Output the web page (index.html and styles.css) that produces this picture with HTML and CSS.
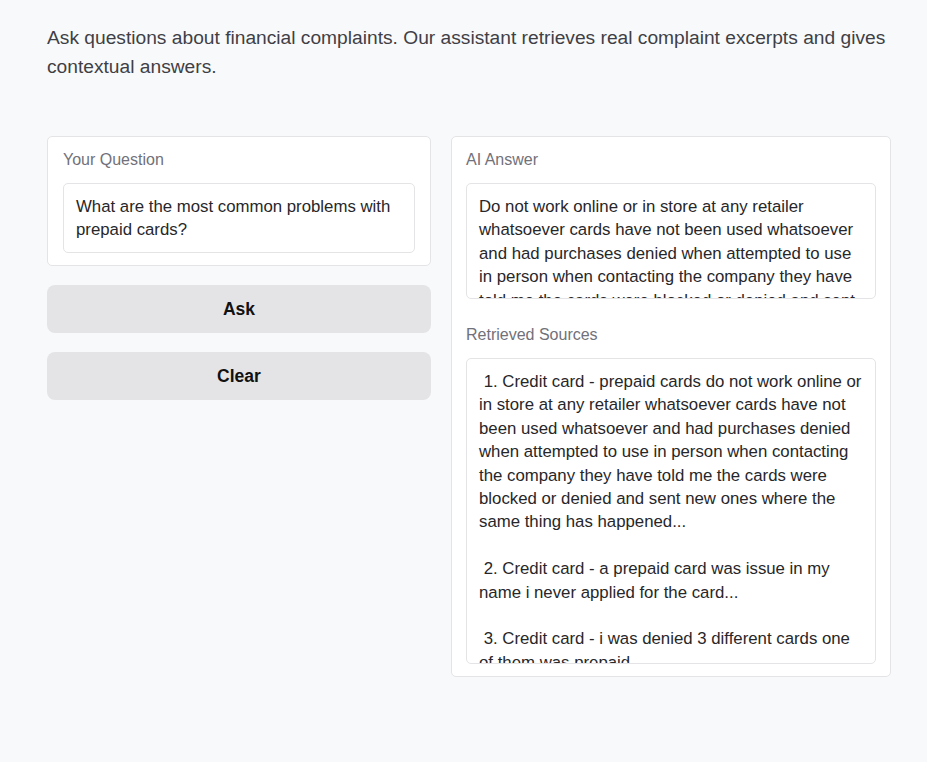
FILE: index.html
```html
<!DOCTYPE html>
<html lang="en">
<head>
<meta charset="utf-8">
<title>Financial Complaints Assistant</title>
<link rel="stylesheet" href="styles.css">
</head>
<body>
<div class="app">
  <p class="intro">Ask questions about financial complaints. Our assistant retrieves real complaint excerpts and gives contextual answers.</p>
  <div class="columns">
    <div class="left">
      <div class="card question-card">
        <label class="label" for="q">Your Question</label>
        <div class="box question" id="q">What are the most common problems with prepaid cards?</div>
      </div>
      <button class="btn" type="button">Ask</button>
      <button class="btn" type="button">Clear</button>
    </div>
    <div class="card right">
      <div class="label">AI Answer</div>
      <div class="box answer">Do not work online or in store at any retailer whatsoever cards have not been used whatsoever and had purchases denied when attempted to use in person when contacting the company they have told me the cards were blocked or denied and sent new ones where the same thing has happened. Other common problems include cards issued without being applied for and denials.</div>
      <div class="label sources-label">Retrieved Sources</div>
      <div class="box sources"> 1. Credit card - prepaid cards do not work online or in store at any retailer whatsoever cards have not been used whatsoever and had purchases denied when attempted to use in person when contacting the company they have told me the cards were blocked or denied and sent new ones where the same thing has happened...

 2. Credit card - a prepaid card was issue in my name i never applied for the card...

 3. Credit card - i was denied 3 different cards one of them was prepaid...</div>
    </div>
  </div>
</div>
</body>
</html>
```
FILE: styles.css
```css
html, body {
  margin: 0;
  padding: 0;
  background: #f8f9fb;
}
body {
  font-family: "Liberation Sans", Arial, sans-serif;
  color: #27272a;
}
.app {
  padding: 23px 36px 40px 47px;
}
.intro {
  margin: 0;
  font-size: 19.2px;
  line-height: 29px;
  color: #3f3f46;
}
.columns {
  display: grid;
  grid-template-columns: 384px 440px;
  gap: 20px;
  margin-top: 55px;
  align-items: start;
}
.left {
  display: flex;
  flex-direction: column;
  gap: 19px;
}
.card {
  background: #ffffff;
  border: 1px solid #e4e4e7;
  border-radius: 5px;
  padding: 13px 14px 12px 14px;
  display: flex;
  flex-direction: column;
}
.question-card {
  padding-left: 15px;
  padding-right: 15px;
}
.label {
  display: block;
  font-size: 16px;
  line-height: 20px;
  color: #71717a;
  margin-bottom: 13px;
}
.sources-label {
  margin-top: 26px;
  margin-bottom: 13px;
}
.box {
  background: #ffffff;
  border: 1px solid #e4e4e7;
  border-radius: 5px;
  padding: 11px 12px;
  font-size: 16.8px;
  line-height: 23.4px;
  color: #27272a;
  overflow: hidden;
  white-space: pre-wrap;
}
.question {
  height: 46px;
}
.answer {
  padding-bottom: 0;
  height: 103px;
}
.sources {
  height: 293px;
  padding-bottom: 0;
}
.btn {
  display: block;
  width: 100%;
  height: 48px;
  border: none;
  border-radius: 8px;
  background: #e4e4e7;
  font-family: "Liberation Sans", Arial, sans-serif;
  font-weight: 700;
  font-size: 17.5px;
  color: #111111;
  cursor: pointer;
}
```
